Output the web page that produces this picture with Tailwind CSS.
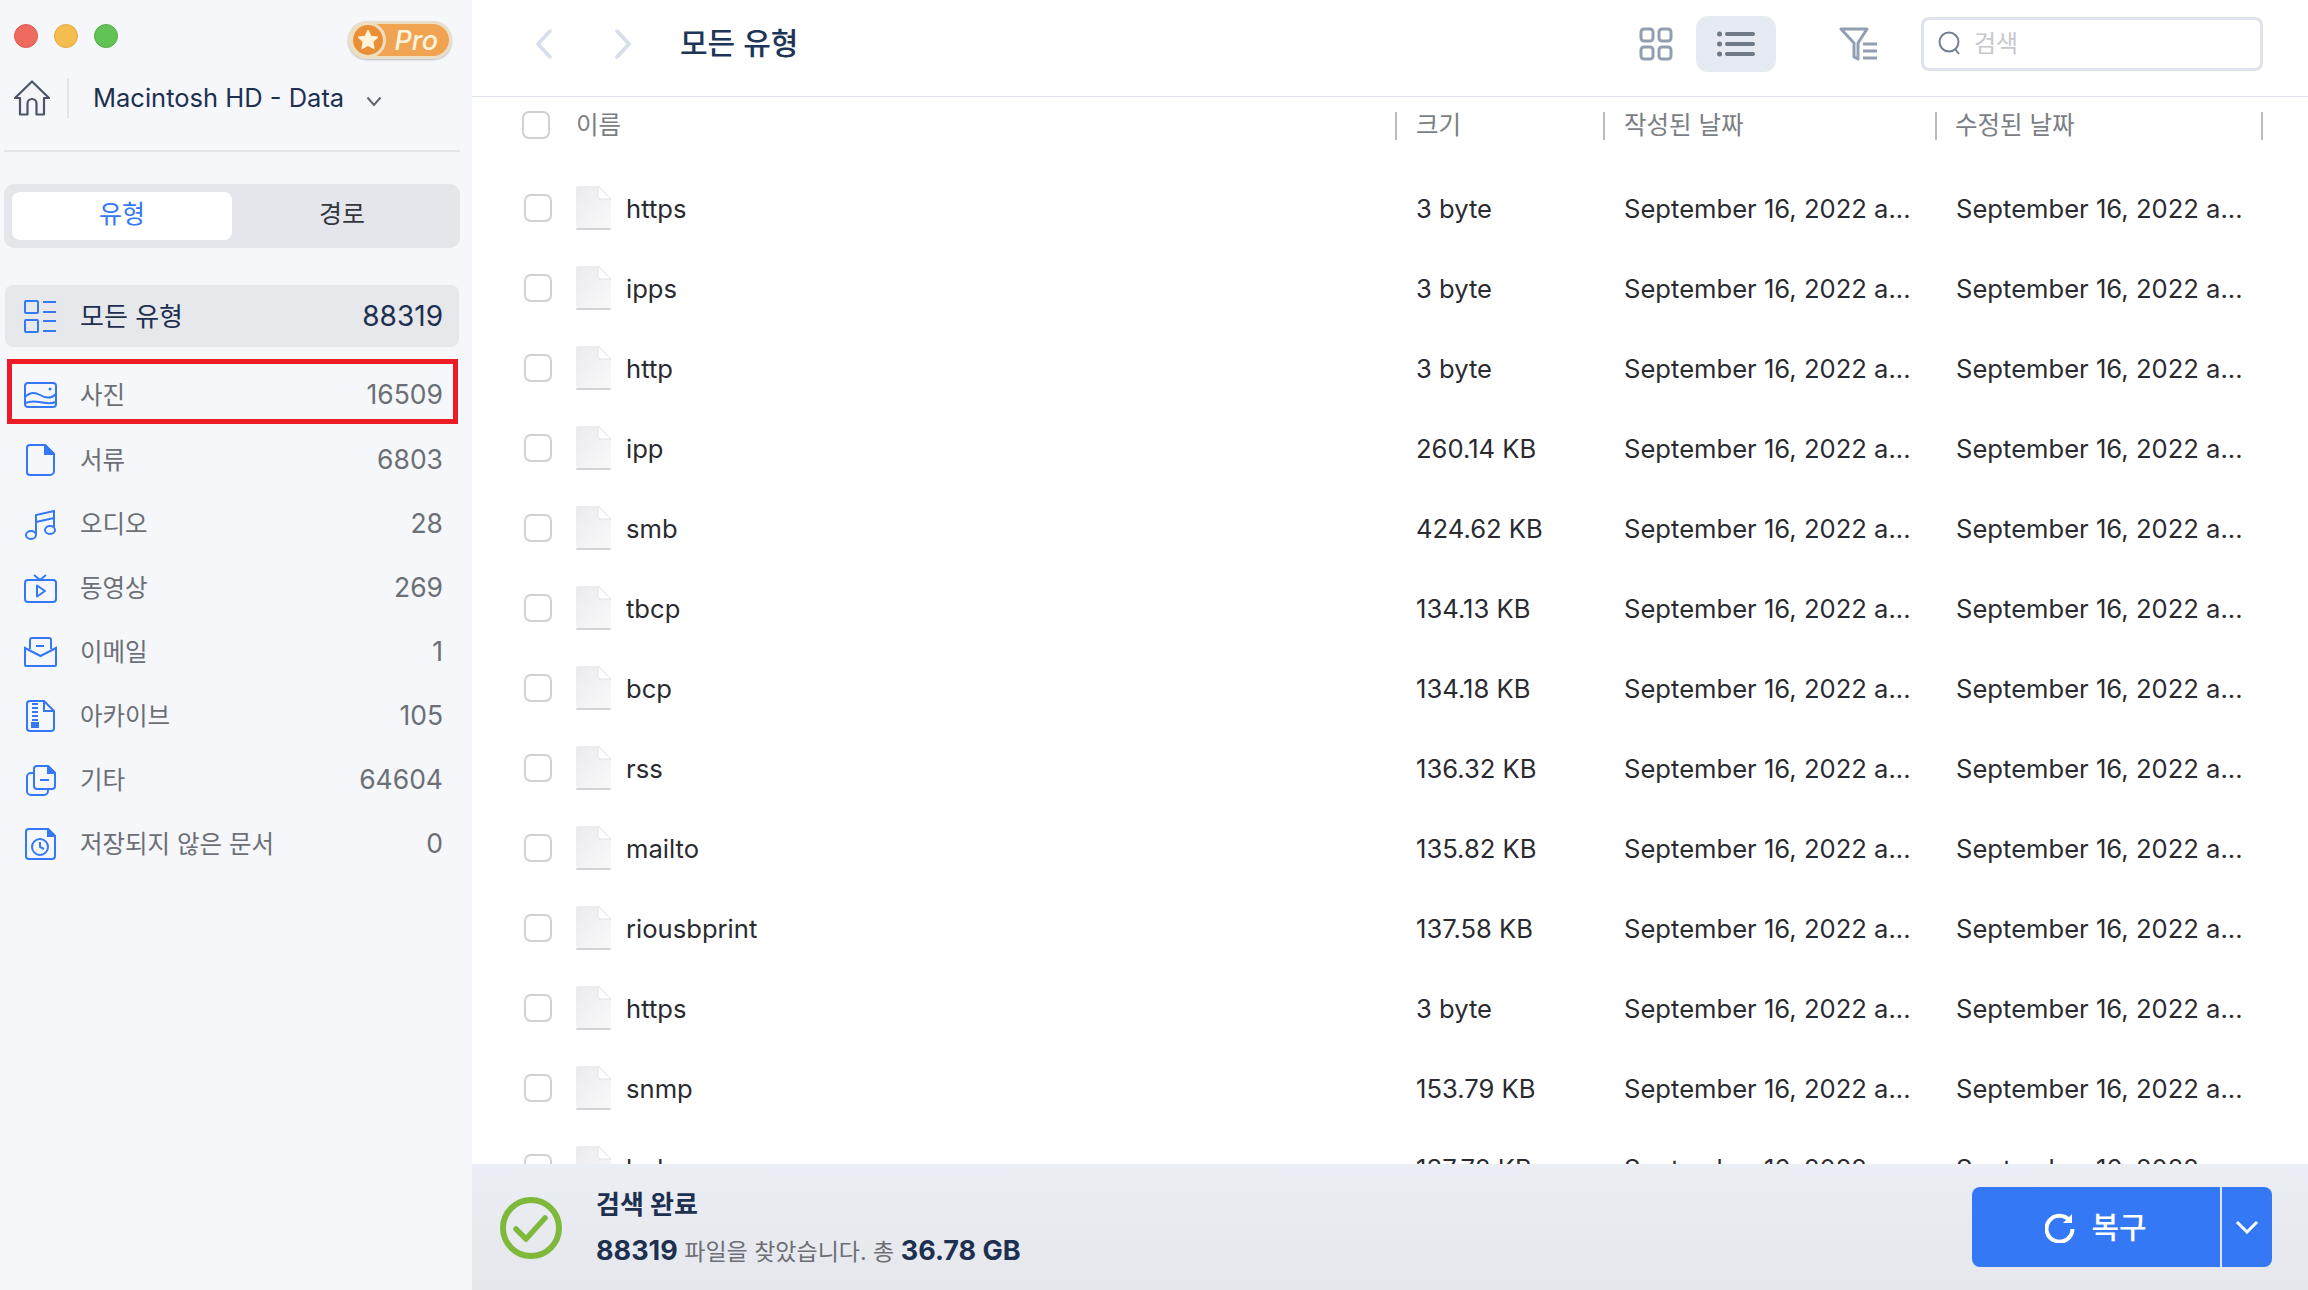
<!DOCTYPE html>
<html>
<head>
    <title>복구</title>
    <script src="https://cdn.jsdelivr.net/npm/@tailwindcss/browser@4"></script>
</head>
<body class="bg-white font-['Inter','Noto_Sans_CJK_KR',sans-serif]">
<div class="flex h-[1290px] w-[2308px] overflow-hidden">

    <!-- sidebar -->
    <aside class="w-[472px] h-full shrink-0 bg-[#f5f7fb] flex flex-col relative">
        <div class="flex items-center h-[72px] pl-[14px] pr-[20px]">
            <div class="flex gap-[16px]">
                <span class="w-[24px] h-[24px] rounded-full bg-[#ee6a5f] border border-[#e0574d]"></span>
                <span class="w-[24px] h-[24px] rounded-full bg-[#f5bd4f] border border-[#e2a63c]"></span>
                <span class="w-[24px] h-[24px] rounded-full bg-[#61c354] border border-[#52ae47]"></span>
            </div>
            <div class="ml-auto mt-[8px] w-[104px] h-[38px] rounded-full bg-[#f0a452] border-[3px] border-[#e9dfc6] shadow-[0_1px_2px_rgba(0,0,0,0.25)] relative flex items-center justify-end pr-[11px]">
                <span class="absolute left-[-1px] top-[-2px] w-[36px] h-[36px] rounded-full bg-[#ea8f35] border-[3px] border-[#eedfc2] flex items-center justify-center">
                    <svg width="24" height="24" viewBox="0 0 24 24"><path d="M12 2.500l2.900 6 6.400.8-4.700 4.500 1.200 6.500L12 17.100l-5.800 3.200 1.200-6.500-4.700-4.500 6.400-.8z" fill="#fff3d8" stroke="#fff3d8" stroke-width="1.500" stroke-linejoin="round"/></svg>
                </span>
                <span class="text-[27px] leading-none italic font-medium text-[#fdf3df]">Pro</span>
            </div>
        </div>

        <div class="flex items-center h-[52px] pl-[14px]">
            <svg width="36" height="36" viewBox="0 0 36 36" fill="none" stroke="#4a5568" stroke-width="2.200" stroke-linejoin="round"><path d="M1 18L18 1.500 35 18h-5v16.500h-7.500V23.500a4.500 4.500 0 0 0-9 0V34.500H6V18z" fill="#f4f5f8"/></svg>
            <span class="w-[2px] h-[40px] bg-[#e2e4e9] ml-[17px]"></span>
            <span class="ml-[24px] text-[25.500px] leading-none text-[#1e3050]">Macintosh HD - Data</span>
            <svg class="ml-[22px] mt-[6px]" width="16" height="11" viewBox="0 0 16 11" fill="none" stroke="#5f6672" stroke-width="2"><path d="M1.500 1.500L8 9l6.500-7.500"/></svg>
        </div>

        <div class="mx-[4px] mt-[26px] w-[456px] h-[2px] bg-[#e3e5e9]"></div>

        <div class="mx-[4px] mt-[32px] w-[456px] h-[64px] rounded-[10px] bg-[#e4e6eb] p-[8px] flex">
            <div class="w-[220px] rounded-[8px] bg-white flex items-center justify-center pb-[3px] text-[25px] text-[#3478f6]">유형</div>
            <div class="flex-1 flex items-center justify-center pb-[3px] text-[25px] text-[#33363d]">경로</div>
        </div>

        <div class="mx-[5px] mt-[37px] w-[454px] h-[62px] rounded-[8px] bg-[#e6e8ec] flex items-center pl-[19px] pr-[16px]">
            <svg width="33" height="33" viewBox="0 0 33 33" fill="none" stroke="#3478f6" stroke-width="2"><rect x="1" y="1" width="13" height="12" rx="1"/><rect x="1" y="20" width="13" height="12" rx="1"/><path d="M19 2h13M19 12h13M19 21h13M19 31h13"/></svg>
            <span class="ml-[23px] text-[26px] text-[#1e3050]">모든 유형</span>
            <span class="ml-auto text-[28px] text-[#1e3050]">88319</span>
        </div>

        <div class="mx-[7px] mt-[12px] w-[451px] h-[65px] border-[5px] border-[#ed1c24] flex items-center pt-[7px] pl-[12px] pr-[10px]">
            <svg width="33" height="26" viewBox="0 0 33 26" fill="none" stroke="#3478f6" stroke-width="2"><rect x="1" y="1" width="31" height="24" rx="3"/><path d="M1 15c5-5 10-5 15-2s11 4 16-1"/><path d="M1 21c5-2 9-2 14-1s12 2 17 0"/><circle cx="26" cy="7" r="1.500" fill="#3478f6" stroke="none"/></svg>
            <span class="ml-[23px] text-[24.500px] text-[#6c6f75]">사진</span>
            <span class="ml-auto text-[26.500px] text-[#6c6f75]">16509</span>
        </div>

        <div class="mt-[4px] flex items-center h-[64px] pl-[24px] pr-[29px]">
            <span class="w-[33px] flex justify-center"><svg width="29" height="32" viewBox="0 0 29 32" fill="none" stroke="#3478f6" stroke-width="2"><path d="M4 1h15l9 9v17a4 4 0 0 1-4 4H4a3 3 0 0 1-3-3V4a3 3 0 0 1 3-3z"/><path d="M19 1l9 9h-9z" fill="#3478f6"/></svg></span>
            <span class="ml-[23px] text-[24.500px] text-[#6c6f75]">서류</span>
            <span class="ml-auto text-[26.500px] text-[#6c6f75]">6803</span>
        </div>
        <div class="flex items-center h-[64px] pl-[24px] pr-[29px]">
            <span class="w-[33px] flex justify-center"><svg width="31" height="31" viewBox="0 0 31 31" fill="none" stroke="#3478f6" stroke-width="2"><ellipse cx="6" cy="26" rx="5" ry="4"/><ellipse cx="25" cy="21" rx="5" ry="4"/><path d="M11 26V6L29 2v16M11 13l18-4"/></svg></span>
            <span class="ml-[23px] text-[24.500px] text-[#6c6f75]">오디오</span>
            <span class="ml-auto text-[26.500px] text-[#6c6f75]">28</span>
        </div>
        <div class="flex items-center h-[64px] pl-[24px] pr-[29px]">
            <span class="w-[33px] flex justify-center"><svg width="33" height="29" viewBox="0 0 33 29" fill="none" stroke="#3478f6" stroke-width="2"><rect x="1" y="6" width="31" height="22" rx="3"/><path d="M10 1l6 5 6-5"/><path d="M13 11.500l8 5.500-8 5.500z" stroke-linejoin="round"/></svg></span>
            <span class="ml-[23px] text-[24.500px] text-[#6c6f75]">동영상</span>
            <span class="ml-auto text-[26.500px] text-[#6c6f75]">269</span>
        </div>
        <div class="flex items-center h-[64px] pl-[24px] pr-[29px]">
            <span class="w-[33px] flex justify-center"><svg width="33" height="30" viewBox="0 0 33 30" fill="none" stroke="#3478f6" stroke-width="2"><path d="M6 12V3a2 2 0 0 1 2-2h17a2 2 0 0 1 2 2v9"/><path d="M1 11l15.500 8L32 11v17a1 1 0 0 1-1 1H2a1 1 0 0 1-1-1z"/><path d="M12 9h8"/></svg></span>
            <span class="ml-[23px] text-[24.500px] text-[#6c6f75]">이메일</span>
            <span class="ml-auto text-[26.500px] text-[#6c6f75]">1</span>
        </div>
        <div class="flex items-center h-[64px] pl-[24px] pr-[29px]">
            <span class="w-[33px] flex justify-center"><svg width="29" height="32" viewBox="0 0 29 32" fill="none" stroke="#3478f6" stroke-width="2"><path d="M4 1h14l10 10v17a3 3 0 0 1-3 3H4a3 3 0 0 1-3-3V4a3 3 0 0 1 3-3z"/><path d="M18 1v10h10"/><path d="M6 4h6M6 8h6M6 12h6M6 16h6M6 20h6"/><rect x="6" y="23" width="6" height="4" fill="#3478f6"/></svg></span>
            <span class="ml-[23px] text-[24.500px] text-[#6c6f75]">아카이브</span>
            <span class="ml-auto text-[26.500px] text-[#6c6f75]">105</span>
        </div>
        <div class="flex items-center h-[64px] pl-[24px] pr-[29px]">
            <span class="w-[33px] flex justify-center"><svg width="30" height="31" viewBox="0 0 30 31" fill="none" stroke="#3478f6" stroke-width="2"><path d="M8 8V4a3 3 0 0 1 3-3h11l7 7v13a3 3 0 0 1-3 3H11a3 3 0 0 1-3-3z"/><path d="M22 1l7 7h-7z" fill="#3478f6"/><path d="M8 8H5a4 4 0 0 0-4 4v14a4 4 0 0 0 4 4h13a4 4 0 0 0 4-4v-2"/><path d="M14 15h9"/></svg></span>
            <span class="ml-[23px] text-[24.500px] text-[#6c6f75]">기타</span>
            <span class="ml-auto text-[26.500px] text-[#6c6f75]">64604</span>
        </div>
        <div class="flex items-center h-[64px] pl-[24px] pr-[29px]">
            <span class="w-[33px] flex justify-center"><svg width="31" height="32" viewBox="0 0 31 32" fill="none" stroke="#3478f6" stroke-width="2"><path d="M4 1h19l7 7v20a3 3 0 0 1-3 3H4a3 3 0 0 1-3-3V4a3 3 0 0 1 3-3z"/><path d="M23 1l7 7h-7z" fill="#3478f6"/><circle cx="15" cy="19" r="8"/><path d="M15 14v5l4 2"/></svg></span>
            <span class="ml-[23px] text-[24.500px] text-[#6c6f75]">저장되지 않은 문서</span>
            <span class="ml-auto text-[26.500px] text-[#6c6f75]">0</span>
        </div>
    </aside>

    <!-- main -->
    <main class="flex-1 h-full flex flex-col min-w-0">
        <header class="h-[97px] shrink-0 border-b border-[#dfe4ef] flex items-center pl-[64px] pb-[9px]">
            <svg width="16" height="30" viewBox="0 0 16 30" fill="none" stroke="#d5deec" stroke-width="3.500" stroke-linecap="round" stroke-linejoin="round"><path d="M14 2L2 15l12 13"/></svg>
            <svg class="ml-[63px]" width="16" height="30" viewBox="0 0 16 30" fill="none" stroke="#d5deec" stroke-width="3.500" stroke-linecap="round" stroke-linejoin="round"><path d="M2 2l12 13L2 28"/></svg>
            <h1 class="ml-[49px] text-[30px] font-medium text-[#1e3557]">모든 유형</h1>
            <svg class="ml-auto" width="34" height="34" viewBox="0 0 34 34" fill="none" stroke="#929fb3" stroke-width="3"><rect x="2" y="2" width="12" height="12" rx="3"/><rect x="20" y="2" width="12" height="12" rx="3"/><rect x="2" y="20" width="12" height="12" rx="3"/><rect x="20" y="20" width="12" height="12" rx="3"/></svg>
            <div class="ml-[23px] w-[80px] h-[56px] rounded-[12px] bg-[#e6eaf2] flex items-center justify-center">
                <svg width="38" height="26" viewBox="0 0 38 26" fill="#6f7885"><circle cx="2.500" cy="3" r="2.500"/><circle cx="2.500" cy="13" r="2.500"/><circle cx="2.500" cy="23" r="2.500"/><rect x="8" y="1" width="30" height="4" rx="2"/><rect x="8" y="11" width="30" height="4" rx="2"/><rect x="8" y="21" width="30" height="4" rx="2"/></svg>
            </div>
            <svg class="ml-[63px]" width="38" height="34" viewBox="0 0 38 34" fill="none" stroke="#929fb3" stroke-width="3" stroke-linejoin="round"><path d="M2 2h26L19 16v16l-4-2V16z"/><path d="M24 17h14M24 24h14M24 31h14"/></svg>
            <div class="ml-[44px] mr-[45px] w-[342px] h-[54px] rounded-[8px] border-[3px] border-[#dfe3ec] bg-white flex items-center pl-[14px]">
                <svg width="24" height="26" viewBox="0 0 24 26" fill="none" stroke="#747f97" stroke-width="2"><circle cx="11" cy="11" r="9.500"/><path d="M17 18l4 5"/></svg>
                <span class="ml-[12px] text-[24px] text-[#c6c8cd]">검색</span>
            </div>
        </header>

        <div class="h-[56px] shrink-0 relative flex items-center text-[24.500px] text-[#7b7e84]">
            <span class="ml-[50px] w-[28px] h-[28px] rounded-[7px] border-2 border-[#cfd1d5] bg-white"></span>
            <span class="absolute left-[104px]">이름</span>
            <span class="absolute left-[923px] top-[15px] w-[2px] h-[28px] bg-[#b9bcc1]"></span>
            <span class="absolute left-[944px]">크기</span>
            <span class="absolute left-[1131px] top-[15px] w-[2px] h-[28px] bg-[#b9bcc1]"></span>
            <span class="absolute left-[1152px]">작성된 날짜</span>
            <span class="absolute left-[1463px] top-[15px] w-[2px] h-[28px] bg-[#b9bcc1]"></span>
            <span class="absolute left-[1483px]">수정된 날짜</span>
            <span class="absolute left-[1789px] top-[15px] w-[2px] h-[28px] bg-[#b9bcc1]"></span>
        </div>

        <div id="rows" class="flex-1 min-h-0 overflow-hidden pt-[16px]"></div>

        <footer class="h-[126px] shrink-0 bg-gradient-to-b from-[#ebeef4] to-[#e5e7ec] flex items-center pl-[28px] pr-[36px]">
            <svg width="62" height="62" viewBox="0 0 62 62" fill="none" stroke="#7fb93c" class="mt-[1px]"><circle cx="31" cy="31" r="28" stroke-width="6"/><path d="M16 32l10 10 19-21" stroke-width="5.500" stroke-linecap="round" stroke-linejoin="round"/></svg>
            <div class="ml-[34px] mt-[2px] flex flex-col gap-[14px]">
                <div class="text-[26px] leading-[32px] font-bold text-[#1e3050]">검색 완료</div>
                <div class="text-[23px] leading-[32px] text-[#6c6f75]"><b class="text-[27px] font-bold text-[#1e3050]">88319</b> 파일을 찾았습니다. 총 <b class="text-[27px] font-bold text-[#1e3050]">36.78 GB</b></div>
            </div>
            <div class="ml-auto w-[300px] h-[80px] rounded-[8px] bg-[#3578f6] flex text-white">
                <div class="w-[248px] flex items-center justify-center gap-[16px] text-[30px] font-medium">
                    <svg width="30" height="32" viewBox="0 0 30 32" fill="none" stroke="#fff" stroke-width="4"><path d="M25 10a13 13 0 1 0 2.500 8"/><path d="M27 3v9H18" fill="#fff" stroke="none"/></svg>
                    <span>복구</span>
                </div>
                <div class="w-[2px] bg-[#dbe6fb]"></div>
                <div class="flex-1 flex items-center justify-center">
                    <svg width="24" height="14" viewBox="0 0 24 14" fill="none" stroke="#fff" stroke-width="3"><path d="M2 2l10 10L22 2"/></svg>
                </div>
            </div>
        </footer>
    </main>
</div>

<script>
    const files = [
        ['https', '3 byte'], ['ipps', '3 byte'], ['http', '3 byte'], ['ipp', '260.14 KB'],
        ['smb', '424.62 KB'], ['tbcp', '134.13 KB'], ['bcp', '134.18 KB'], ['rss', '136.32 KB'],
        ['mailto', '135.82 KB'], ['riousbprint', '137.58 KB'], ['https', '3 byte'], ['snmp', '153.79 KB'],
        ['lpd', '137.72 KB'],
    ];
    const date = 'September 16, 2022 a...';
    document.getElementById('rows').innerHTML = files.map(([name, size]) => `
        <div class="relative h-[80px] flex items-center text-[25.600px] text-[#2a2b30]">
            <span class="absolute left-[52px] top-[25px] w-[28px] h-[28px] rounded-[7px] border-2 border-[#cfd1d5] bg-white"></span>
            <svg class="absolute left-[103px] top-[16px]" width="38" height="46" viewBox="0 0 38 46"><defs><linearGradient id="fileFill" x1="0" y1="0" x2="1" y2="1"><stop offset="0" stop-color="#ebebee"/><stop offset="1" stop-color="#f9f9fa"/></linearGradient></defs><path d="M3 1h20l13 13v27a2 2 0 0 1-2 2H3a2 2 0 0 1-2-2V3a2 2 0 0 1 2-2z" fill="url(#fileFill)"/><path d="M23 1l13 13H25a2 2 0 0 1-2-2z" fill="#fff" stroke="#e2e2e5"/><path d="M2 44h33" stroke="#d3d3d6" stroke-width="2" stroke-linecap="round"/></svg>
            <span class="absolute left-[154px]">${name}</span>
            <span class="absolute left-[944px]">${size}</span>
            <span class="absolute left-[1152px]">${date}</span>
            <span class="absolute left-[1484px]">${date}</span>
        </div>`).join('');
</script>
</body>
</html>
